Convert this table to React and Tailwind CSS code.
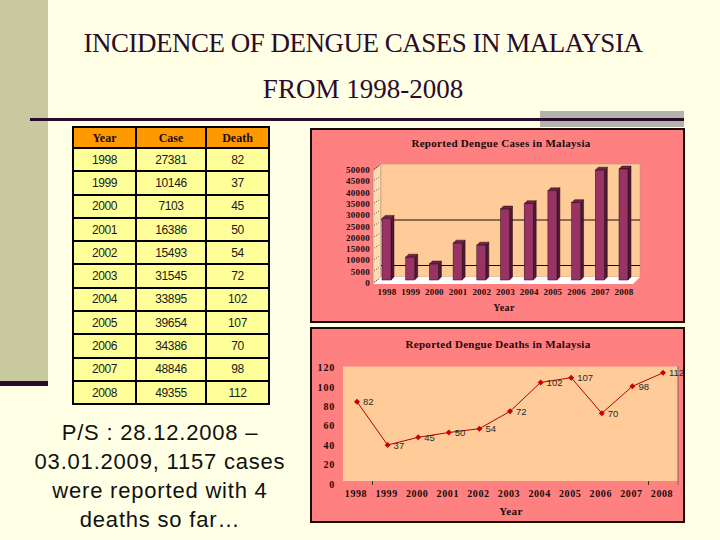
import React from 'react';

const years = [1998, 1999, 2000, 2001, 2002, 2003, 2004, 2005, 2006, 2007, 2008];
const cases = [27381, 10146, 7103, 16386, 15493, 31545, 33895, 39654, 34386, 48846, 49355];
const deaths = [82, 37, 45, 50, 54, 72, 102, 107, 70, 98, 112];

const serif = '"Liberation Serif", "Times New Roman", serif';

function CasesChart() {
    const floor = 280;
    const k = 0.002249;
    return (
        <div className="w-[375px] h-[195px] border-2 border-[#1a0a0a] bg-[#ff8080]">
            <svg width="371" height="191" viewBox="312 130 371 191" style={{ fontFamily: serif }}>
                <text x="501" y="147" textAnchor="middle" fontSize="11" fontWeight="bold" fill="#1a0a0a" letterSpacing="0.3">
                    Reported Dengue Cases in Malaysia
                </text>
                {/* walls + floor */}
                <polygon points="373,171 381,164 381,277 373,284" fill="#ffdcb0" stroke="#9a8070" strokeWidth="0.6" />
                <rect x="381" y="164" width="259" height="113" fill="#ffcc99" stroke="#b09080" strokeWidth="0.5" />
                <polygon points="373,284 381,277 640,277 633,284" fill="#ffffff" />
                <line x1="381" y1="220" x2="640" y2="220" stroke="#1a0a0a" strokeWidth="1" />
                <line x1="381" y1="265.5" x2="640" y2="265.5" stroke="#1a0a0a" strokeWidth="1" />
                {Array.from({ length: 11 }).map((_, i) => {
                    const y = 283 - i * 11.3;
                    return (
                        <g key={i}>
                            <line x1="374" y1={y - 1} x2="379" y2={y - 4} stroke="#333" strokeWidth="0.8" strokeDasharray="1 1.5" />
                            <text x="370" y={y + 3} textAnchor="end" fontSize="9" fontWeight="bold" fill="#1a0a0a" letterSpacing="0.3">
                                {i * 5000}
                            </text>
                        </g>
                    );
                })}
                {cases.map((v, i) => {
                    const x = 382 + i * 23.7;
                    const top = floor - v * k;
                    return (
                        <g key={i} stroke="#2a0a18" strokeWidth="0.5">
                            <polygon points={`${x + 9},${top} ${x + 12},${top - 3} ${x + 12},${floor - 3} ${x + 9},${floor}`} fill="#4d1832" />
                            <polygon points={`${x},${top} ${x + 3},${top - 3} ${x + 12},${top - 3} ${x + 9},${top}`} fill="#6e2448" />
                            <rect x={x} y={top} width="9" height={floor - top} fill="#993366" />
                        </g>
                    );
                })}
                {years.map((y, i) => (
                    <text key={y} x={387 + i * 23.7} y="295" textAnchor="middle" fontSize="9" fontWeight="bold" fill="#1a0a0a" letterSpacing="0.2">
                        {y}
                    </text>
                ))}
                <text x="504" y="311" textAnchor="middle" fontSize="10" fontWeight="bold" fill="#1a0a0a" letterSpacing="0.4">
                    Year
                </text>
            </svg>
        </div>
    );
}

function DeathsChart() {
    const px = (i) => 357 + i * 30.6;
    const py = (v) => 480.6 - v * 0.962;
    const pts = deaths.map((v, i) => `${px(i)},${py(v)}`).join(' ');
    return (
        <div className="mt-[4px] w-[375px] h-[196px] border-2 border-[#1a0a0a] bg-[#ff8080]">
            <svg width="371" height="192" viewBox="312 329 371 192" style={{ fontFamily: serif }}>
                <text x="498" y="348" textAnchor="middle" fontSize="11" fontWeight="bold" fill="#1a0a0a" letterSpacing="0.3">
                    Reported Dengue Deaths in Malaysia
                </text>
                <rect x="343" y="366.5" width="335" height="114.5" fill="#ffcc99" />
                <line x1="678" y1="366" x2="678" y2="485" stroke="#7a6a6a" strokeWidth="1" />
                <line x1="372.5" y1="481" x2="372.5" y2="485" stroke="#333" strokeWidth="1" />
                <line x1="648.5" y1="481" x2="648.5" y2="485" stroke="#333" strokeWidth="1" />
                {Array.from({ length: 7 }).map((_, i) => (
                    <text key={i} x="335" y={484 - i * 19.4 + 3.5} textAnchor="end" fontSize="10" fontWeight="bold" fill="#1a0a0a" letterSpacing="0.8">
                        {i * 20}
                    </text>
                ))}
                <polyline points={pts} fill="none" stroke="#b30000" strokeWidth="1" />
                {deaths.map((v, i) => {
                    const x = px(i);
                    const y = py(v);
                    return (
                        <g key={i}>
                            <polygon points={`${x},${y - 3} ${x + 3},${y} ${x},${y + 3} ${x - 3},${y}`} fill="#cc0000" />
                            <text x={x + 6} y={y + 3.5} fontSize="9.5" fill="#2a2a2a" style={{ fontFamily: '"Liberation Sans", Arial, sans-serif' }}>
                                {v}
                            </text>
                        </g>
                    );
                })}
                {years.map((y, i) => (
                    <text key={y} x={px(i) - 1} y="497" textAnchor="middle" fontSize="10" fontWeight="bold" fill="#1a0a0a" letterSpacing="0.6">
                        {y}
                    </text>
                ))}
                <text x="511" y="515" textAnchor="middle" fontSize="11" fontWeight="bold" fill="#1a0a0a" letterSpacing="0.4">
                    Year
                </text>
            </svg>
        </div>
    );
}

function DataTable() {
    const cell = 'bg-[#ffff99] flex items-center justify-center h-[21.3px] text-[12px] tracking-[-0.4px] text-[#1a1a1a]';
    const head = 'bg-[#ff9900] flex items-center justify-center h-[19px] text-[12px] font-bold text-[#1a0a0a]';
    return (
        <div
            className="ml-[42px] -mt-px w-[198px] grid grid-cols-[61px_68px_61px] gap-[2px] p-[2px] bg-black"
            style={{ fontFamily: '"Liberation Sans", Arial, sans-serif' }}
        >
            <div className={head} style={{ fontFamily: serif }}>Year</div>
            <div className={head} style={{ fontFamily: serif }}>Case</div>
            <div className={head} style={{ fontFamily: serif }}>Death</div>
            {years.map((y, i) => (
                <React.Fragment key={y}>
                    <div className={cell}>{y}</div>
                    <div className={cell}>{cases[i]}</div>
                    <div className={cell}>{deaths[i]}</div>
                </React.Fragment>
            ))}
        </div>
    );
}

export default function App() {
    return (
        <div className="w-[720px] h-[540px] flex bg-[#ffffe6] overflow-hidden">
            {/* left bar */}
            <div className="w-[48px] shrink-0 flex flex-col">
                <div className="h-[381px] bg-[#c9c9a0]" />
                <div className="h-[5px] bg-[#2b0b2b]" />
            </div>

            <div className="flex-1 flex flex-col">
                <div
                    className="h-[111px] pt-[20px] pr-[42px] flex flex-col items-center text-[27px] leading-[46px] tracking-[-0.5px] text-[#2b0b2b] whitespace-nowrap"
                    style={{ fontFamily: serif }}
                >
                    <div>INCIDENCE OF DENGUE CASES IN MALAYSIA</div>
                    <div className="tracking-normal">FROM 1998-2008</div>
                </div>

                <div className="-ml-[18px] w-[654px] h-[16px] flex items-center">
                    <div className="flex-1 h-[3px] bg-[#2b0b2b]" />
                    <div className="w-[144px] h-[16px] bg-[#b3b3ac] flex items-center">
                        <div className="w-full h-[3px] bg-[#2b0b2b]" />
                    </div>
                </div>

                <div className="-ml-[18px] flex">
                    <div className="w-[260px] flex flex-col">
                        <DataTable />
                        <p
                            className="mt-[13px] text-center text-[22px] leading-[29px] tracking-[0.8px] text-[#111]"
                            style={{ fontFamily: '"Liberation Sans", Arial, sans-serif' }}
                        >
                            P/S : 28.12.2008 –<br />
                            03.01.2009, 1157 cases<br />
                            were reported with 4<br />
                            deaths so far…
                        </p>
                    </div>
                    <div className="ml-[20px] mt-px flex flex-col">
                        <CasesChart />
                        <DeathsChart />
                    </div>
                </div>
            </div>
        </div>
    );
}
